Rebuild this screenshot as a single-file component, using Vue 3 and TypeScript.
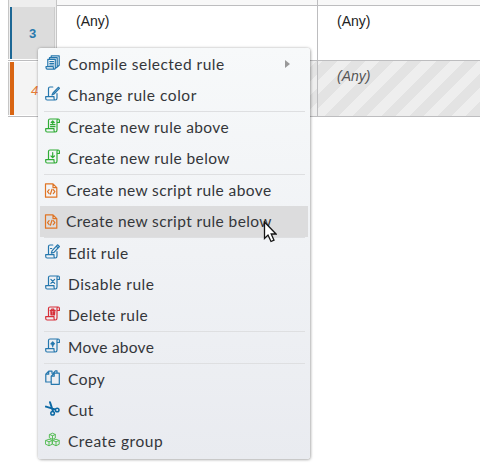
<script setup lang="ts">
interface Item { label: string; icon: string; spacing: number; sub?: boolean; active?: boolean; script?: boolean }

const groups: Item[][] = [
  [
    { label: 'Compile selected rule', icon: 'compile', spacing: 0.48, sub: true },
    { label: 'Change rule color', icon: 'color', spacing: 0.54 },
  ],
  [
    { label: 'Create new rule above', icon: 'above', spacing: 0.4 },
    { label: 'Create new rule below', icon: 'below', spacing: 0.42 },
  ],
  [
    { label: 'Create new script rule above', icon: 'script', spacing: 0.4, script: true },
    { label: 'Create new script rule below', icon: 'script', spacing: 0.4, script: true, active: true },
  ],
  [
    { label: 'Edit rule', icon: 'edit', spacing: 0.45 },
    { label: 'Disable rule', icon: 'disable', spacing: 0.5 },
    { label: 'Delete rule', icon: 'delete', spacing: 0.42 },
  ],
  [{ label: 'Move above', icon: 'move', spacing: 0.25 }],
  [
    { label: 'Copy', icon: 'copy', spacing: 0.45 },
    { label: 'Cut', icon: 'cut', spacing: 0.45 },
    { label: 'Create group', icon: 'group', spacing: 0.55 },
  ],
]

const scroll = 'M3.5 10.5V2.5Q3.5 1 5 1H13.2Q14.4 1 14.4 2.5V4.5H12M12 4.5V12Q12 14 10.3 14H2.2Q.7 14 .7 12.3V10.7H9V12.2Q9 14 10.3 14M12 4.5V2.5Q12 1 13.2 1'
const openScroll = 'M7.8 1H5Q3.5 1 3.5 2.5V10.7M.7 10.7H9V12.2Q9 14 10.3 14H2.2Q.7 14 .7 12.3ZM12 7.5V12Q12 14 10.3 14'
const paths: Record<string, string[]> = {
  compile: ['M1 11.7H8.3V12.6Q8.3 14.2 9.6 14.2H2.4Q1 14.2 1 12.6ZM2.8 11.7V4.3H10.3V12.6Q10.3 14.2 9.6 14.2M4.5 4V2.6H12.2V12L10.5 13.3M6.2 2.4V.9H14.2V10.2L12.2 12', 'M4.8 6.5H8.6M4.8 8.3H8.6M4.8 10H8.6'],
  color: [openScroll, 'M7 9L8 7L13.3 1.3L14.4 2.3L9 8Z'],
  above: [scroll, 'M7.7 3V6.2M6.2 4.5L7.7 3L9.2 4.5M5.5 6.7H10M5.5 8.7H10'],
  below: [scroll, 'M7.7 3.5V8.7M6 7L7.7 8.7L9.4 7'],
  script: ['M1.5 .8H9L12.8 4.6V14.2H1.5ZM9 .8V4.6H12.8', 'M5.1 6.7L3.5 8.7L5.1 10.7M9.3 6.7L10.9 8.7L9.3 10.7M8 6.2L6.4 11.2'],
  edit: [openScroll, 'M6.3 9.2L7 6.8L12.5 .8L14.4 2.5L9 8.4ZM11.3 2.2L13.1 3.8M5.5 4.5H6.7'],
  disable: [scroll, 'M5.9 4.4L9.6 8.3M9.6 4.4L5.9 8.3'],
  delete: [scroll, 'M5.2 4.4H10.2M6.7 4.2V3H8.7V4.2M5.8 5L6 9H9.5L9.8 5M7 5.7V8.5M8.5 5.7V8.5'],
  move: [scroll, 'M7.7 8.8V4M5.9 5.9L7.7 4L9.5 5.9M7 7V5M8.4 7V5'],
  copy: ['M7 3.3V1.2H3.7L.8 4.2V12H6M3.7 1.2V4.2H.8', 'M9.2 3.2H14.3V14.3H6.2V6.2L9.2 3.2V6.2H6.2M7.8 4.4V3.6L10.4 .8H12V3'],
  group: ['M4.7 2.5L7.5 1.2L10.3 2.5V6L7.5 7.4L4.7 6ZL7.5 3.8L10.3 2.5M7.5 3.8V7.4', 'M.8 8.5L4 7.2L7.2 8.5V12.3L4 13.7L.8 12.3ZL4 9.8L7.2 8.5M4 9.8V13.7', 'M7.8 8.5L11 7.2L14.2 8.5V12.3L11 13.7L7.8 12.3ZL11 9.8L14.2 8.5M11 9.8V13.7'],
}
</script>

<template>
  <main class="screen">
    <div class="grid">
      <div class="row head"><div class="number"></div><div class="cell"></div><div class="cell"></div></div>
      <div class="row">
        <div class="number selected"><span>3</span></div>
        <div class="cell">(Any)</div>
        <div class="cell">(Any)</div>
      </div>
      <div class="row draft">
        <div class="number"><span>4</span></div>
        <div class="cell"></div>
        <div class="cell">(Any)</div>
      </div>
    </div>

    <nav class="menu">
      <ul v-for="(group, g) in groups" :key="g" class="group">
        <li v-for="item in group" :key="item.label" class="item" :class="{ active: item.active, script: item.script }">
          <svg class="icon" :class="'icon-' + item.icon" viewBox="0 0 15 15">
            <template v-if="item.icon === 'cut'">
              <path class="blade" d="M5 1.2L8 10.2M1 5.6L10 8.4" />
              <circle cx="7.6" cy="12.2" r="1.8" /><circle cx="12.2" cy="9" r="1.8" />
            </template>
            <template v-else>
              <path v-for="d in paths[item.icon]" :key="d" :d="d" />
            </template>
          </svg>
          <span class="label" :style="{ letterSpacing: item.spacing + 'px' }">{{ item.label }}</span>
          <svg v-if="item.sub" class="arrow" viewBox="0 0 5 8"><path d="M0 0L5 4L0 8Z" /></svg>
        </li>
      </ul>
    </nav>

    <svg class="pointer" viewBox="0 0 14 22">
      <path d="M1.5 1V17.5L5 14L8 20.5L11 19.2L8.2 13H13Z" />
    </svg>
  </main>
</template>

<style>
body { background: #fff; }
</style>

<style scoped>
.screen { position: relative; width: 480px; height: 474px; overflow: hidden; background: #fff; font-family: "Liberation Sans", sans-serif; }
.grid { padding-left: 8px; }
.row { display: grid; grid-template-columns: 49px 261px 1fr; height: 55px; box-sizing: border-box; border-bottom: 1px solid #bdbdbf; }
.row.head { height: 6px; background: #f8f8f8; }
.row.draft { height: 56px; }
.number { display: flex; align-items: center; justify-content: center; box-sizing: border-box; border: 1px solid #c6c6c6; border-top: 0; border-bottom: 0; background: #f5f5f5; }
.head .number { background: #eee; }
.number.selected { margin: 1px 0; background: linear-gradient(90deg, #efefef 1px, #1c6795 1px 3px, #dcdcdc 3px 45px, #cbcbcb 45px 46px, #eee 46px); font-size: 13px; font-weight: 700; color: #2879ad; }
.selected span { padding-top: 1px; }
.draft .number { margin: 1px 0; background: linear-gradient(90deg, #efefef 1px, #d96513 1px 5px, #f4f4f4 5px); font-size: 13px; font-style: italic; color: #e77b37; padding-left: 4px; padding-top: 3px; }
.cell { box-sizing: border-box; padding: 6px 19px; border-right: 1px solid #bdbdbf; font-size: 14px; line-height: 18px; color: #222; }
.cell:last-child { border-right: 0; }
.draft .cell { font-style: italic; color: #555; background: repeating-linear-gradient(135deg, #eee 0 3.5px, #e3e3e3 3.5px 13.5px, #eee 13.5px 20px); }
.menu { position: absolute; left: 38px; top: 48px; width: 272px; height: 411px; box-sizing: border-box; padding: 1px 2px; border-radius: 3px; background: linear-gradient(#f7f9fa, #e9ebf0); box-shadow: 0 0 3px #0004, 1px 1px 3px #0003; }
.group { margin: 0; padding: 0; list-style: none; }
.group + .group { padding-top: 1px; background: linear-gradient(#dedfe1, #dedfe1) 4px 0 / 261px 1px no-repeat; }
.item { display: flex; align-items: center; height: 31px; padding-left: 5px; color: #34363a; }
.item.active { background: #dcdcdd; }
.icon { width: 15px; height: 15px; flex: none; fill: none; stroke: #2577ad; stroke-width: 1.2; stroke-linejoin: round; stroke-linecap: round; margin-top: -4px; }
.icon-above, .icon-below { stroke: #2fac35; }
.icon-script { stroke: #df7424; margin-left: -1px; margin-top: 0; }
.icon-delete { stroke: #d72f39; }
.icon-group { stroke: #58bd58; stroke-width: 1; }
.icon-cut { stroke: #0c69a4; stroke-width: 1.5; }
.icon .blade { stroke-width: 2; }
.label { margin-left: 8px; margin-top: -2px; font: 400 15.5px/20px Lato, sans-serif; white-space: nowrap; }
.script .label { margin-left: 7px; }
.arrow { width: 5px; height: 8px; margin-left: auto; margin-right: 18px; margin-top: -2px; fill: #999; }
.pointer { position: absolute; left: 263px; top: 221px; width: 14px; height: 22px; fill: #fff; stroke: #151515; stroke-width: 1.3; }
</style>
